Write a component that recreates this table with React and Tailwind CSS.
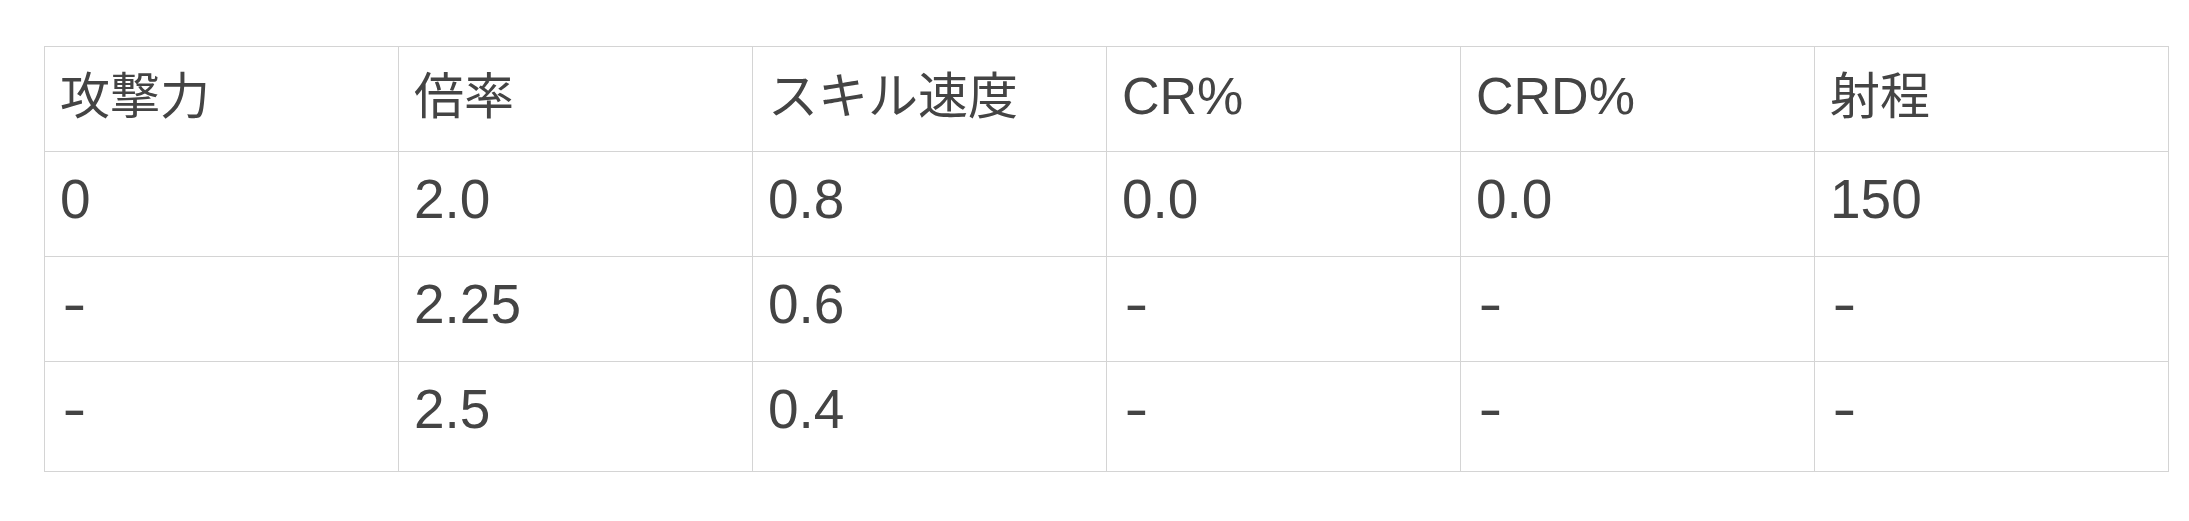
import React from "react";

const header = [
  { t: "攻撃力", cjk: true },
  { t: "倍率", cjk: true },
  { t: "スキル速度", cjk: true },
  { t: "CR%", cjk: false },
  { t: "CRD%", cjk: false },
  { t: "射程", cjk: true },
];

const rows = [
  ["0", "2.0", "0.8", "0.0", "0.0", "150"],
  ["-", "2.25", "0.6", "-", "-", "-"],
  ["-", "2.5", "0.4", "-", "-", "-"],
];

export default function App() {
  return (
    <div
      className="w-[2189px] h-[521px] bg-white overflow-hidden pt-[46px] pl-[44px]"
      style={{ fontFamily: '"Liberation Sans", "Noto Sans CJK JP", sans-serif' }}
    >
      <div className="grid grid-cols-[repeat(6,354px)] border-l border-t border-[#d4d4d4] w-max text-[#444444]">
        {header.map((h, i) =>
          h.cjk ? (
            <div
              key={"h" + i}
              className="h-[105px] border-r border-b border-[#d4d4d4] pl-[15px] pt-[25px] text-[50px] leading-none whitespace-nowrap"
            >
              {h.t}
            </div>
          ) : (
            <div
              key={"h" + i}
              className="h-[105px] border-r border-b border-[#d4d4d4] pl-[15px] pt-[23px] text-[52px] leading-none whitespace-nowrap"
            >
              {h.t}
            </div>
          )
        )}
        {rows.map((r, ri) =>
          r.map((c, ci) => (
            <div
              key={ri + "-" + ci}
              className={
                (ri === rows.length - 1 ? "h-[110px] " : "h-[105px] ") +
                "border-r border-b border-[#d4d4d4] pl-[15px] pt-[20px] text-[55px] leading-none whitespace-nowrap"
              }
            >
              {c === "-" ? (
                <span className="inline-block pl-[2px] scale-x-[1.3] origin-left">-</span>
              ) : (
                c
              )}
            </div>
          ))
        )}
      </div>
    </div>
  );
}
